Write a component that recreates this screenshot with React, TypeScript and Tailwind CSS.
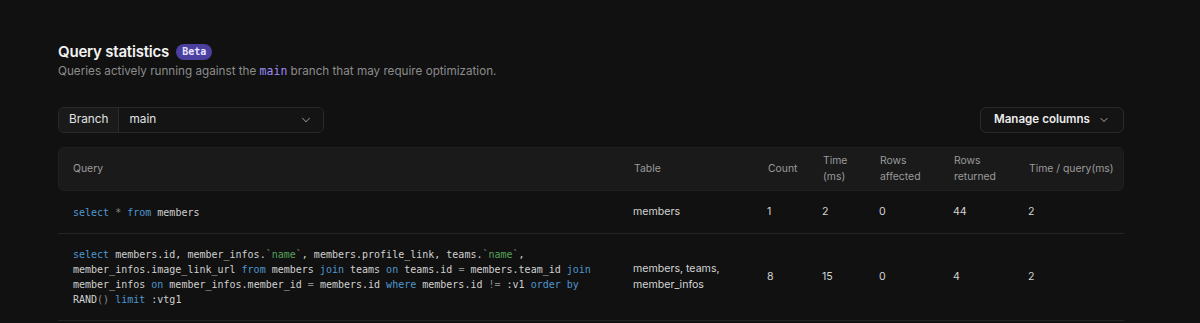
import React from "react";
import { ChevronDown } from "lucide-react";

const K = ({ children }: { children: React.ReactNode }) => (
  <span className="text-[#4f97cf]">{children}</span>
);
const S = ({ children }: { children: React.ReactNode }) => (
  <span className="text-[#56a35a]">{children}</span>
);
const O = ({ children }: { children: React.ReactNode }) => (
  <span className="text-[#8a8a8a]">{children}</span>
);

const cols = "grid grid-cols-[560px_134px_55px_57px_74px_75px_111px]";

export default function App() {
  return (
    <div
      className="min-h-[323px] w-[1200px] bg-[#111111] text-[#e5e5e5]"
      style={{ fontFamily: "Inter, 'Noto Sans', sans-serif" }}
    >
      <div className="px-[58px] pt-[42px] w-[1066px] box-content">
        <div className="flex items-center gap-[7px]">
          <h1 className="text-[15px] leading-[20px] font-semibold tracking-[-0.2px] text-[#f2f2f2]">Query statistics</h1>
          <span className="h-[16px] px-[6px] rounded-full bg-[#4b3f9f] text-[#e8e4ff] text-[10px] font-bold leading-[16px] font-['DejaVu_Sans_Mono',monospace]">
            Beta
          </span>
        </div>
        <p className="mt-[1px] text-[11.7px] leading-[16px] text-[#8c8c8c]">
          Queries actively running against the{" "}
          <span className="font-['DejaVu_Sans_Mono',monospace] text-[11.5px] text-[#9d8cf5]">main</span>{" "}
          branch that may require optimization.
        </p>

        <div className="mt-[28px] flex items-center justify-between">
          <div className="flex h-[26px] w-[266px] rounded-[6px] border border-[#2a2a2a] overflow-hidden text-[11.8px]">
            <div className="flex items-center px-[10px] bg-[#1a1a1a] border-r border-[#2a2a2a] text-[#e2e2e2]">Branch</div>
            <div className="flex flex-1 items-center justify-between pl-[10px] pr-[10px] bg-[#141414] text-[#e2e2e2]">
              <span>main</span>
              <ChevronDown size={14} strokeWidth={1.75} className="text-[#8a8a8a]" />
            </div>
          </div>
          <div className="flex h-[26px] w-[144px] items-center justify-center gap-[8px] rounded-[6px] border border-[#2a2a2a] bg-[#141414] text-[11.6px] font-semibold text-[#ececec]">
            Manage columns
            <ChevronDown size={12} strokeWidth={2} className="text-[#b0b0b0]" />
          </div>
        </div>

        <div className="mt-[14px]">
          <div className={`${cols} h-[44px] items-center rounded-[6px] border border-[#202020] bg-[#1a1a1a] text-[10.4px] leading-[16px] text-[#9a9a9a]`}>
            <div className="pl-[14px]">Query</div>
            <div className="pl-[15px]">Table</div>
            <div className="pl-[15px]">Count</div>
            <div className="pl-[15px]">Time<br />(ms)</div>
            <div className="pl-[15px]">Rows<br />affected</div>
            <div className="pl-[15px]">Rows<br />returned</div>
            <div className="pl-[15px]">Time / query(ms)</div>
          </div>

          <div className={`${cols} items-center border-b border-[#242424] py-[13px] text-[10.6px] leading-[16px] text-[#d4d4d4]`}>
            <div className="pl-[15px] pr-[15px] font-['DejaVu_Sans_Mono',monospace] text-[10px] leading-[15px] text-[#d0d0d0]">
              <K>select</K> <O>*</O> <K>from</K> members
            </div>
            <div className="pl-[15px]">members</div>
            <div className="pl-[15px]">1</div>
            <div className="pl-[15px]">2</div>
            <div className="pl-[15px]">0</div>
            <div className="pl-[15px]">44</div>
            <div className="pl-[15px]">2</div>
          </div>

          <div className={`${cols} items-center border-b border-[#242424] py-[13px] text-[10.6px] leading-[16px] text-[#d4d4d4]`}>
            <div className="pl-[15px] pr-[15px] font-['DejaVu_Sans_Mono',monospace] text-[10px] leading-[15px] text-[#d0d0d0]">
              <K>select</K> members.id, member_infos.<O>`</O><S>name</S><O>`</O>, members.profile_link, teams.<O>`</O><S>name</S><O>`</O>,
              member_infos.image_link_url <K>from</K> members <K>join</K> teams <K>on</K> teams.id <O>=</O> members.team_id <K>join</K>{" "}
              member_infos <K>on</K> member_infos.member_id <O>=</O> members.id <K>where</K> members.id <O>!=</O> :v1 <K>order</K> <K>by</K>{" "}
              RAND<O>()</O> <K>limit</K> :vtg1
            </div>
            <div className="pl-[15px] pr-[10px]">members, teams, member_infos</div>
            <div className="pl-[15px]">8</div>
            <div className="pl-[15px]">15</div>
            <div className="pl-[15px]">0</div>
            <div className="pl-[15px]">4</div>
            <div className="pl-[15px]">2</div>
          </div>
        </div>
      </div>
    </div>
  );
}
